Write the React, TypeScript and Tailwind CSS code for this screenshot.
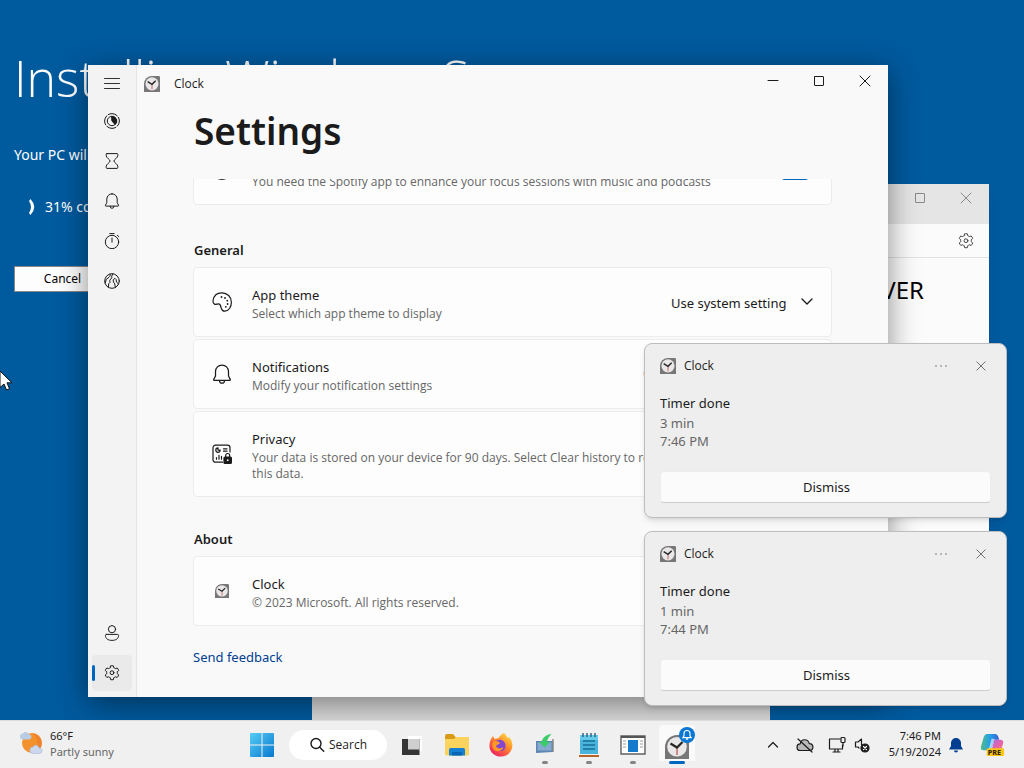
import type { ReactNode } from "react";

type IconProps = { className?: string };

function Line({ className = "size-4", box = "0 0 16 16", width = 1, children }: { className?: string; box?: string; width?: number; children: ReactNode }) {
  return (
    <svg aria-hidden="true" viewBox={box} className={`shrink-0 ${className}`} fill="none" stroke="currentColor" strokeWidth={width} strokeLinecap="round" strokeLinejoin="round">
      {children}
    </svg>
  );
}

const Menu = () => (
  <Line><path d="M.5 3.500h15M.5 8.500h15M.5 13.500h15" strokeWidth=".9" /></Line>
);

const Focus = () => (
  <Line>
    <circle cx="8" cy="8" r="7.4" strokeDasharray="9.6 2.02" strokeDashoffset="4" />
    <circle cx="8" cy="8" r="4.7" />
    <path d="M8 3.3A4.7 4.7 0 0 1 11 11.6L8 8Z" fill="currentColor" />
  </Line>
);

const Hourglass = () => (
  <Line>
    <path d="M3 .6h10a.8.8 0 0 1 .8.8v1.2c0 2.2-3.9 4-3.9 5.4s3.9 3.200 3.900 5.400v1.200a.8.8 0 0 1-.8.8H3a.8.8 0 0 1-.8-.8v-1.200c0-2.200 3.900-4 3.900-5.400S2.200 4.800 2.200 2.600V1.400A.8.8 0 0 1 3 .6Z" />
  </Line>
);

const Bell = ({ className }: IconProps) => (
  <Line className={className}>
    <path d="M8 .8A5.200 5.200 0 0 0 2.800 6v3.600l-1.400 2.700c-.2.400.1.800.5.800h12.200c.4 0 .7-.4.500-.8l-1.400-2.700V6A5.200 5.200 0 0 0 8 .8ZM6 13.300a2 2 0 0 0 4 0" />
  </Line>
);

const Stopwatch = () => (
  <Line>
    <circle cx="8" cy="9" r="6.700" />
    <path d="M8 5v4.200M5.800.6h4.400M13.400 2.300l1.400 1.300" />
  </Line>
);

const World = () => (
  <Line>
    <circle cx="8" cy="8" r="7.300" />
    <path d="M6.200 1.200c.3 1.300-.3 2.300-1.200 3.100L2.300 6.300 1.200 10M4.400 14.200l.3-3.400 1.300-1.400-.2-2.200 2-2.400-.1-1.700 1.200-2.200M14.600 11l-2.200-2-.2-2.400-1.300-1.300-1.700 1.500.2 2.300 1.400 1.800.5 3.600" />
  </Line>
);

const Person = () => (
  <Line>
    <circle cx="8" cy="4.200" r="3.600" />
    <path d="M2.400 9.400h11.200c.6 0 1 .4 1 1 0 3.200-2.600 5-6.600 5s-6.600-1.800-6.600-5c0-.6.400-1 1-1Z" />
  </Line>
);

const Gear = ({ className }: IconProps) => (
  <Line className={className}>
    <path d="M6.600.9Q8 .5 9.400.9l.4 1.900q.9.300 1.500.8l1.900-.6q1.100 1.100 1.500 2.500l-1.500 1.300q.2.900 0 1.800l1.500 1.300q-.4 1.400-1.500 2.500l-1.900-.6q-.7.600-1.500.8l-.4 2q-1.400.4-2.800 0l-.4-2q-.9-.300-1.500-.8l-1.900.6Q1.700 11.300 1.300 9.900l1.500-1.300q-.2-.9 0-1.800L1.300 5.500Q1.700 4.100 2.800 3l1.900.6q.7-.6 1.500-.8Z" />
    <circle cx="8" cy="7.700" r="1.900" />
  </Line>
);

const Palette = () => (
  <Line className="size-5" box="0 0 20 20" width={1.2}>
    <path d="M1 8.500C1.900 3.200 5.700.7 10 .8c5.200.1 9.400 4 9.400 9.400 0 4.800-2.800 9-6.600 9-2.300 0-3.400-1.900-3.900-4.200-.4-2-.7-3.400-2.500-3.200-2.200.3-2.500 1-3.900.3C1.300 11.500.8 10.200 1 8.500Z" />
    <g fill="currentColor" stroke="none">
      <circle cx="9.500" cy="5" r=".9" /><circle cx="13" cy="6" r=".9" /><circle cx="15.300" cy="8.700" r=".9" /><circle cx="15.600" cy="12" r=".9" /><circle cx="13.800" cy="14.800" r=".9" />
    </g>
  </Line>
);

const PrivacyIcon = () => (
  <Line className="size-5" box="0 0 20 20" width={1.2}>
    <path d="M10.500 18.200H3.500a2.500 2.500 0 0 1-2.500-2.500v-12A2.500 2.500 0 0 1 3.500 1.200h12A2.500 2.500 0 0 1 18 3.700V8" />
    <path d="M6 3.900a2.200 2.200 0 1 0 2.200 2.200H6ZM11.500 4.800H15M11.500 7.200H15M4.500 13.500v1.700M7 11.300v3.900M9.500 12.300v2.900" />
    <rect x="12" y="13" width="7.400" height="6.400" rx="1" fill="currentColor" />
    <path d="M13.700 13v-1.500a2 2 0 0 1 4 0V13" />
    <circle cx="15.700" cy="16.200" r=".9" fill="white" stroke="none" />
  </Line>
);

const Close = ({ className = "size-3" }: IconProps) => (
  <Line className={className} box="0 0 12 12"><path d="m1 1 10 10M11 1 1 11" /></Line>
);

const Maximize = () => (
  <Line className="size-3" box="0 0 12 12"><rect x="1.500" y="1.500" width="9" height="9" rx=".5" /></Line>
);

function ClockLogo({ className = "size-4" }: IconProps) {
  return (
    <svg aria-hidden="true" viewBox="0 0 24 24" className={`shrink-0 ${className}`}>
      <path d="M12 0H22q2 0 2 2v22H0V12A12 12 0 0 1 12 0Z" fill="#777" />
      <circle cx="12" cy="11.800" r="9.800" fill="#e9e7e7" />
      <path d="M12 12.500v7.500" stroke="#c46d68" strokeWidth="1.500" />
      <path d="m5.500 8.500 6.500 4 5.500-5.500" fill="none" stroke="#272727" strokeWidth="2.200" />
    </svg>
  );
}

function NavButton({ label, selected = false, short = false, children }: { label: string; selected?: boolean; short?: boolean; children: ReactNode }) {
  return (
    <button aria-label={label} className={`flex w-10 items-center justify-center rounded ${short ? "h-8" : "h-9"} ${selected ? "bg-[#eaeaea]" : ""}`}>
      {selected && <span className="-ml-3 mr-[9px] h-4 w-[3px] rounded-full bg-[#0067c0]" />}
      {children}
    </button>
  );
}

function SettingCard({ icon, title, detail, tall = false, children }: { icon: ReactNode; title: string; detail: string; tall?: boolean; children?: ReactNode }) {
  return (
    <div className={`flex shrink-0 items-center rounded border border-[#ececec] bg-[#fdfdfd] pr-[18px] ${tall ? "h-[86px]" : "h-[70px]"}`}>
      <div className="flex w-14 shrink-0 justify-center">{icon}</div>
      <div className="min-w-0 flex-1 pt-[3px] pl-0.5">
        <h3 className="text-[13px] leading-5">{title}</h3>
        <p className={`mt-px font-['Open_Sans',sans-serif] text-[12px] leading-4 text-[#666] ${tall ? "max-w-[440px]" : ""}`}>{detail}</p>
      </div>
      {children}
    </div>
  );
}

function ClockWindow() {
  return (
    <section aria-label="Clock" className="absolute top-[65px] left-[88px] flex h-[632px] w-[800px] bg-[#f9f9f9] shadow-[0_6px_28px_rgba(0,0,0,0.45)]">
      <nav aria-label="Clock sections" className="flex w-[49px] shrink-0 flex-col items-center gap-1 border-r border-[#e5e5e5] bg-[#f3f3f3] pt-0.5 pb-1.5">
        <NavButton label="Navigation" short><Menu /></NavButton>
        <NavButton label="Focus sessions"><Focus /></NavButton>
        <NavButton label="Timer"><Hourglass /></NavButton>
        <NavButton label="Alarm"><Bell /></NavButton>
        <NavButton label="Stopwatch"><Stopwatch /></NavButton>
        <NavButton label="World clock"><World /></NavButton>
        <div className="grow" />
        <NavButton label="Account"><Person /></NavButton>
        <NavButton label="Settings" selected><Gear /></NavButton>
      </nav>
      <div className="flex min-w-0 flex-1 flex-col">
        <header className="flex h-8 items-start justify-between">
          <div className="flex items-center gap-3.5 pt-2.5 pl-[7px]">
            <ClockLogo />
            <span className="font-['Open_Sans',sans-serif] text-[12px] leading-[18px]">Clock</span>
          </div>
          <div className="flex">
            <button aria-label="Minimize" className="flex h-8 w-[46px] items-center justify-center"><Line className="size-3" box="0 0 12 12"><path d="M1 5.500h10" /></Line></button>
            <button aria-label="Maximize" className="flex h-8 w-[46px] items-center justify-center"><Maximize /></button>
            <button aria-label="Close" className="flex h-8 w-[46px] items-center justify-center"><Close /></button>
          </div>
        </header>
        <h1 className="h-[82px] pt-2 pl-[57px] text-[37px] leading-[52px] font-semibold">Settings</h1>
        <main className="flex flex-1 flex-col overflow-hidden pr-14 pl-14">
          <div className="-mt-[44px] shrink-0">
            <SettingCard icon={<Line className="size-5" box="0 0 20 20"><circle cx="10" cy="10" r="9.500" /></Line>} title="Spotify" detail="You need the Spotify app to enhance your focus sessions with music and podcasts">
              <span className="mr-1 h-5 w-7 rounded bg-[#0067c0]" />
            </SettingCard>
          </div>
          <h2 className="mt-[35px] mb-[7px] pl-px text-[13px] leading-5 font-semibold">General</h2>
          <div className="flex flex-col gap-0.5">
            <SettingCard icon={<Palette />} title="App theme" detail="Select which app theme to display">
              <label className="flex items-center gap-3.5 text-[13px]">
                <span className="sr-only">App theme</span>
                <select className="appearance-none bg-transparent pt-0.5 leading-5">
                  <option>Use system setting</option>
                </select>
                <Line className="size-3" box="0 0 12 12" width={1.4}><path d="m1 3 5 5 5-5" /></Line>
              </label>
            </SettingCard>
            <SettingCard icon={<Bell className="size-5" />} title="Notifications" detail="Modify your notification settings">
              <a href="#notifications" className="mr-3 text-[13px] text-[#003e92]">Open notification settings</a>
            </SettingCard>
            <SettingCard tall icon={<PrivacyIcon />} title="Privacy" detail="Your data is stored on your device for 90 days. Select Clear history to remove this data.">
              <button className="text-[13px]">Clear history</button>
            </SettingCard>
          </div>
          <h2 className="mt-8 mb-[7px] pl-px text-[13px] leading-5 font-semibold">About</h2>
          <SettingCard icon={<ClockLogo className="size-3.5" />} title="Clock" detail="© 2023 Microsoft. All rights reserved." />
          <a href="#feedback" className="mt-[21px] self-start text-[13px] leading-5 text-[#003e92]">Send feedback</a>
        </main>
      </div>
    </section>
  );
}

function Toast({ duration, time }: { duration: string; time: string }) {
  return (
    <article className="flex h-[175px] w-[363px] flex-col rounded-lg border border-[#bdbdbd] bg-[#eeeeee] px-[15px] pt-3 pb-3.5 shadow-md">
      <header className="flex h-5 items-center">
        <ClockLogo />
        <span className="ml-2 grow font-['Open_Sans',sans-serif] text-[12px]">Clock</span>
        <button aria-label="More options" className="mr-6 flex size-4 items-center justify-center text-[#555]">
          <svg aria-hidden="true" viewBox="0 0 12 4" className="h-1 w-3" fill="currentColor"><circle cx="1" cy="2" r=".7" /><circle cx="6" cy="2" r=".7" /><circle cx="11" cy="2" r=".7" /></svg>
        </button>
        <button aria-label="Close notification" className="mr-0.5 flex size-4 items-center justify-center text-[#555]"><Close className="size-2.5" /></button>
      </header>
      <h2 className="mt-[17px] text-[13px] leading-5">Timer done</h2>
      <p className="mt-px text-[13px] leading-[18px] text-[#666]">{duration}<br />{time}</p>
      <button className="mt-auto h-8 rounded border border-[#ececec] border-b-[#cccccc] bg-[#fbfbfb] pt-0.5 pl-0.5 text-[13px]">Dismiss</button>
    </article>
  );
}

function Task({ label, running = false, active = false, children }: { label: string; running?: boolean; active?: boolean; children: ReactNode }) {
  return (
    <button aria-label={label} className="flex h-12 w-11 flex-col items-center pt-1">
      <span className={`flex h-9 w-9 items-center justify-center rounded-t ${active ? "bg-[#fafafa]" : ""}`}>{children}</span>
      <span className={`h-[3px] rounded-full ${active ? "w-4 bg-[#0067c0]" : running ? "w-1.5 bg-[#858585]" : ""}`} />
    </button>
  );
}

function Taskbar() {
  return (
    <footer className="relative flex h-12 shrink-0 items-center border-t border-[#dcdcdc] bg-[#f0f0f0]">
      <button className="flex h-12 w-60 shrink-0 items-center gap-1.5 pb-0.5 pl-[18px] text-left text-[11px] leading-4">
        <svg aria-hidden="true" viewBox="0 0 26 26" className="size-[26px]">
          <circle cx="14" cy="12" r="10" fill="#f3922d" />
          <path d="M14 2a10 10 0 0 1 3 19.500A14 14 0 0 0 14 2Z" fill="#ed7829" opacity=".6" />
          <path d="M5 8.500a3 3 0 0 1 0-6c1-2.500 5-2 5.800.8 3.200-.2 3.700 5.200.2 5.200Z" fill="#b9cce4" />
          <path d="M15 22.500a3.200 3.200 0 0 1 0-6.400c1.200-3 5.600-2.200 6 .9 4-.3 4.200 5.500.5 5.500Z" fill="#cbd7ec" stroke="#aab7d4" strokeWidth=".6" />
        </svg>
        <span>66°F<br /><span className="text-[#666]">Partly sunny</span></span>
      </button>
      <div className="flex items-center">
        <Task label="Start">
          <svg aria-hidden="true" viewBox="0 0 24 24" className="mt-1 size-6">
            <defs><linearGradient id="start" x1="0" y1="0" x2="1" y2="1"><stop stopColor="#55cdf5" /><stop offset="1" stopColor="#0878cf" /></linearGradient></defs>
            <path d="M0 .8Q0 0 .8 0H11.500v11.500H0ZM12.500 0h10.700q.8 0 .8.800v10.700H12.500ZM0 12.500h11.500V24H.8q-.8 0-.8-.8ZM12.500 12.500H24v10.700q0 .8-.8.800H12.500Z" fill="url(#start)" />
          </svg>
        </Task>
        <button className="mr-1 ml-[5px] flex h-[30px] w-[98px] items-center justify-center gap-1 rounded-full bg-white text-[12px]">
          <Line className="size-4" width={1.4}><circle cx="7" cy="6.500" r="5" /><path d="m10.700 10.200 4 4" /></Line>
          <span className="font-['Open_Sans',sans-serif]">Search</span>
        </button>
        <Task label="Task view">
          <svg aria-hidden="true" viewBox="0 0 24 24" className="mt-1 size-6">
            <path d="M7 3h14v15h-3V6H7Z" fill="#fff" />
            <path d="M1 6h17.500v16H1Z" fill="#353535" /><path d="M7 6h11.500v10.500H7Z" fill="#cfcfcf" />
          </svg>
        </Task>
        <Task label="File Explorer">
          <svg aria-hidden="true" viewBox="0 0 26 24" className="mt-1 h-6 w-[26px]">
            <path d="M1 3q0-2 2-2h6l2.500 3H24q1 0 1 1v5H1Z" fill="#d99a18" />
            <path d="M1 6h9l2-2h12q1 0 1 1v16q0 1.500-1.500 1.500h-21Q1 22.500 1 21Z" fill="#fbd35d" />
            <path d="M5 22.500v-6Q5 15 6.500 15h13q1.500 0 1.500 1.500v6Z" fill="#1681d2" /><path d="M8 19h10v3.500H8Z" fill="#0a65b2" />
          </svg>
        </Task>
        <Task label="Firefox">
          <svg aria-hidden="true" viewBox="0 0 24 24" className="mt-1 size-6">
            <defs><linearGradient id="fox" x1=".9" y1="0" x2=".2" y2="1"><stop stopColor="#ffe84a" /><stop offset=".45" stopColor="#ff8a28" /><stop offset="1" stopColor="#ec1c68" /></linearGradient></defs>
            <path d="M15 0c2 2 3 3 3.500 5l1.500-1c3 3.500 4 7 3 11-1.500 5.500-6 8.500-11 8.500C5 23.500 0 18.500.5 12 .7 8 2 5.500 4 3l1.500 3 4-1C11 2.500 13 1 15 0Z" fill="url(#fox)" />
            <path d="M7.500 7.500c4-2 9 0 9 5.500 0 3-2 5-5 5s-5.500-2-5-5Z" fill="#8246d2" /><path d="M4 9c3-2 5-1 7 1-1 2-3 1-4 3 1 3 5 3 7 1 0 4-7 6-9.500 2C3 14 3 11 4 9Z" fill="#ff9a26" />
          </svg>
        </Task>
        <Task label="Transfer" running>
          <svg aria-hidden="true" viewBox="0 0 24 24" className="mt-1 size-6">
            <path d="M3 8h17v11l-17 1Z" fill="#5e86b2" /><path d="M4.500 9.500h14v8h-14Z" fill="#86a9cf" /><path d="M20 6v13" stroke="#888" strokeWidth="1.500" />
            <path d="M18.500 1c-5 .5-9 3.500-10 8H6l5.500 5.500L17 9h-3c.3-3 2-5.500 4.500-8Z" fill="#3ccb6b" />
          </svg>
        </Task>
        <Task label="Notepad" running>
          <svg aria-hidden="true" viewBox="0 0 24 26" className="mt-1 h-[26px] w-6">
            <path d="M3 3h18v19H3Z" fill="#49b4da" /><path d="M3 3h18v5H3Z" fill="#65cbea" />
            <path d="M6 1v4M10 1v4M14 1v4M18 1v4" stroke="#326582" strokeWidth="1.500" />
            <path d="M6 9h12M6 13h12M6 17h12" stroke="#176d97" strokeWidth="1.500" /><path d="M2 24h20" stroke="#b66428" strokeWidth="2" />
          </svg>
        </Task>
        <Task label="Windows Setup" running>
          <svg aria-hidden="true" viewBox="0 0 26 20" className="mt-1 h-5 w-[26px]">
            <path d="M1 1h24v18H1Z" fill="#fff" stroke="#606060" strokeWidth="1.400" /><path d="M1 2h24" stroke="#555" strokeWidth="2" />
            <path d="M8 5h10v12H8Z" fill="#147acb" /><path d="M3 6h3M3 9h3M3 12h3M20 6h3M20 9h3M20 12h3" stroke="#999" />
          </svg>
        </Task>
        <Task label="Clock, 1 notification" active>
          <span className="relative">
            <ClockLogo className="mt-2 size-6" />
            <span className="absolute top-0 -right-1.5 flex size-4 items-center justify-center rounded-full bg-[#0876d2] text-white"><svg aria-hidden="true" viewBox="0 0 16 16" className="size-3" fill="none" stroke="currentColor" strokeWidth="1.500"><path d="M8 2a4 4 0 0 0-4 4v3l-1.500 2.500h11L12 9V6a4 4 0 0 0-4-4ZM6.500 13.500h3" /></svg></span>
          </span>
        </Task>
      </div>
      <div className="ml-auto flex items-center pr-[19px]">
        <button aria-label="Show hidden icons" className="mr-[17px]"><Line className="size-3" box="0 0 12 12" width={1.2}><path d="m1.500 8 4.500-4.500L10.500 8" /></Line></button>
        <button aria-label="OneDrive" className="mr-3.5">
          <Line className="size-[18px]" box="0 0 18 18" width={1.2}><path d="M4.500 14.500a3.300 3.300 0 0 1-.3-6.600C5 2.500 11.800 2.300 13.300 7.600c4.500-.2 5 6.700.5 6.900Z" fill="#b8b8b8" /><path d="m2 3 14 13" /></Line>
        </button>
        <button aria-label="Network and volume" className="mr-[19px] flex items-center gap-2">
          <Line className="size-[18px]" box="0 0 18 18" width={1.200}><path d="M12 3H1.500v10h13V9M5 16h7M7 13v3M10 13v3" /><rect x="13" y="1.500" width="4" height="5" rx="1" /><path d="M15 6.500V10" /></Line>
          <Line className="size-4" width={1.200}><path d="M7.500 8V2L4 5H1.500v5H4l1 1" /><circle cx="11" cy="11" r="4" fill="currentColor" /><path d="m9.500 9.500 3 3m0-3-3 3" stroke="#fff" /></Line>
        </button>
        <button className="pb-0.5 text-right text-[11px] leading-4">7:46 PM<br />5/19/2024</button>
        <button aria-label="Notifications" className="ml-[7px] text-[#003e92]">
          <svg aria-hidden="true" viewBox="0 0 16 16" className="size-4" fill="currentColor"><path d="M8 1a5 5 0 0 0-5 5v3l-2 3.500h14L13 9V6a5 5 0 0 0-5-5ZM6 13.500a2 2 0 0 0 4 0Z" /></svg>
        </button>
        <button aria-label="Copilot preview" className="ml-4">
          <svg aria-hidden="true" viewBox="0 0 26 26" className="size-[25px]">
            <defs><linearGradient id="pilotA"><stop stopColor="#55bd83" /><stop offset=".5" stopColor="#239fe8" /><stop offset="1" stopColor="#385dd2" /></linearGradient><linearGradient id="pilotB" x2="1" y2="1"><stop stopColor="#9c67eb" /><stop offset=".6" stopColor="#ee65a1" /><stop offset="1" stopColor="#f9a45d" /></linearGradient></defs>
            <path d="M7 2h9q2 0 3 3l1 3h-5l-3 9q-1 2-3 2H4q-4 0-3-4L4 5q1-3 3-3Z" fill="url(#pilotA)" />
            <path d="M15 8h6q4 0 3 4l-2 7q-1 3-4 3H9l3-3Z" fill="url(#pilotB)" />
            <path d="M12 7h3l-3 10q-1 2-3 2Z" fill="#fff" opacity=".6" /><rect x="7" y="17" width="18" height="8" rx="1" fill="#ffc516" />
            <text x="8" y="24" fontSize="7.500" fontWeight="800" fill="#332500" fontFamily="Noto Sans, sans-serif">PRE</text>
          </svg>
        </button>
      </div>
    </footer>
  );
}

export default function App() {
  return (
    <div className="flex min-h-screen flex-col overflow-hidden bg-[#005a9e] font-['Noto_Sans',sans-serif] text-[#1b1b1b]">
      <div className="relative flex-1 overflow-hidden">
        <section aria-label="Windows Setup" className="absolute top-[38px] left-3.5 whitespace-nowrap text-white">
          <h1 className="font-['Open_Sans',sans-serif] text-[50px] leading-[80px] font-light">Installing Windows Server</h1>
          <p className="mt-[27px] text-[14px] leading-5">Your PC will restart several times</p>
          <p className="mt-8 flex items-center gap-[7px] pl-3 text-[14px] leading-5">
            <svg aria-hidden="true" viewBox="0 0 12 16" className="h-4 w-3"><path d="M4.500 0Q12 8 4.500 16L3 14Q7 8 3 2Z" fill="#fff" /></svg>
            31% complete
          </p>
          <button className="mt-[49px] h-[26px] w-[97px] border border-[#888] bg-[#fdfdfd] text-[12px] text-black">Cancel</button>
        </section>
        <section aria-label="Document" className="absolute top-[184px] left-[400px] h-[500px] w-[589px] bg-[#fbfbfb] shadow-lg">
          <header className="flex h-10 justify-end bg-[#e5e5e5] text-[#888]">
            <button aria-label="Maximize document" className="flex h-7 w-[46px] items-center justify-center"><Maximize /></button>
            <button aria-label="Close document" className="flex h-7 w-[46px] items-center justify-center"><Close /></button>
          </header>
          <div className="flex h-[34px] items-center justify-end border-b border-[#e1e1e1] pr-[15px] text-[#444]">
            <button aria-label="Document settings"><Gear /></button>
          </div>
          <p className="pt-4 pr-[65px] text-right text-[24px] leading-8 text-black">SERVER</p>
        </section>
        <section aria-label="Background application" className="absolute bottom-0 left-[312px] h-10 w-[458px] bg-[#d9d9d9]" />
        <ClockWindow />
        <aside aria-label="Notifications" className="absolute right-[17px] bottom-3.5 flex flex-col gap-[13px]">
          <Toast duration="3 min" time="7:46 PM" />
          <Toast duration="1 min" time="7:44 PM" />
        </aside>
        <svg aria-hidden="true" viewBox="0 0 12 20" className="absolute top-[371px] left-0 h-5 w-3"><path d="M0 0v16.500l4-3.500 2.500 6 3-1.200-2.500-6H12Z" fill="#fff" stroke="#111" /></svg>
      </div>
      <Taskbar />
    </div>
  );
}
